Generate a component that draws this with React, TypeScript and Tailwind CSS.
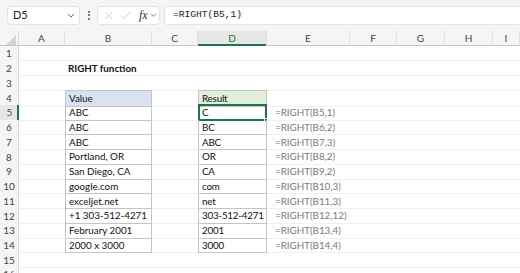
import React from "react";

const cols = ["A", "B", "C", "D", "E", "F", "G", "H", "I"];

const rows: { b?: string; d?: string; e?: string }[] = [
  {},
  {},
  {},
  { b: "Value", d: "Result" },
  { b: "ABC", d: "C", e: "=RIGHT(B5,1)" },
  { b: "ABC", d: "BC", e: "=RIGHT(B6,2)" },
  { b: "ABC", d: "ABC", e: "=RIGHT(B7,3)" },
  { b: "Portland, OR", d: "OR", e: "=RIGHT(B8,2)" },
  { b: "San Diego, CA", d: "CA", e: "=RIGHT(B9,2)" },
  { b: "google.com", d: "com", e: "=RIGHT(B10,3)" },
  { b: "exceljet.net", d: "net", e: "=RIGHT(B11,3)" },
  { b: "+1 303-512-4271", d: "303-512-4271", e: "=RIGHT(B12,12)" },
  { b: "February 2001", d: "2001", e: "=RIGHT(B13,4)" },
  { b: "2000 x 3000", d: "3000", e: "=RIGHT(B14,4)" },
  {},
  {},
];

const gridCols = "grid grid-cols-[19px_46px_87px_46px_69px_83px_47px_48px_48px_1fr]";

const Chevron = ({ className }: { className?: string }) => (
  <svg viewBox="0 0 10 6" className={className} fill="none" stroke="#555" strokeWidth="1.1">
    <path d="M1 1l4 4 4-4" />
  </svg>
);

const Toolbar = () => (
  <div className="flex h-[31px] items-center bg-[#f5f5f5] pb-[1px] pl-[7px]">
    <div className="flex h-[19px] w-[73px] items-center justify-between rounded-[4px] border border-[#e3e3e3] bg-white pl-[5px] pr-[4px] text-[11px] text-[#222]">
      <span>D5</span>
      <Chevron className="h-[5px] w-[8px]" />
    </div>
    <div className="flex w-[17px] flex-col items-center gap-[1.5px]">
      <span className="h-[2px] w-[2px] rounded-full bg-[#555]" />
      <span className="h-[2px] w-[2px] rounded-full bg-[#555]" />
      <span className="h-[2px] w-[2px] rounded-full bg-[#555]" />
    </div>
    <div className="flex h-[19px] w-[63px] items-center rounded-[4px] border border-[#e3e3e3] bg-white pl-[6px]">
      <svg viewBox="0 0 10 10" className="h-[9px] w-[9px]" fill="none" stroke="#c8c8c8" strokeWidth="1">
        <path d="M1 1l8 8M9 1l-8 8" />
      </svg>
      <svg viewBox="0 0 12 10" className="ml-[7px] h-[9px] w-[11px]" fill="none" stroke="#c8c8c8" strokeWidth="1">
        <path d="M1 5l3.5 3.5L11 1" />
      </svg>
      <span className="ml-[8px] font-['Liberation_Serif'] text-[12px] italic leading-none text-[#333]">fx</span>
      <Chevron className="ml-[2px] h-[4px] w-[7px]" />
    </div>
    <div className="ml-[4px] flex h-[19px] flex-1 items-center rounded-l-[4px] border border-r-0 border-[#e3e3e3] bg-white pl-[8px] font-['Liberation_Mono'] text-[9.6px] text-[#222]">
      =RIGHT(B5,1)
    </div>
  </div>
);

const ColumnHeaders = () => (
  <div className={`${gridCols} h-[15px] border-b border-[#c6c6c6] bg-[#f5f5f5] text-[10px] text-[#444]`}>
    <div className="relative border-r border-[#dcdcdc]">
      <svg viewBox="0 0 10 10" className="absolute bottom-[1px] right-[2px] h-[10px] w-[10px]">
        <path d="M10 0L10 10L0 10Z" fill="#d4d4d4" />
      </svg>
    </div>
    {cols.map((c) => (
      <div
        key={c}
        className={
          c === "D"
            ? "flex items-center justify-center border-r border-[#dcdcdc] bg-[#e6e6e6] shadow-[inset_0_-2px_0_#217346] text-[#1e6b41]"
            : "flex items-center justify-center border-r border-[#e2e2e2]"
        }
      >
        {c}
      </div>
    ))}
  </div>
);

export default function App() {
  return (
    <div className="h-[273px] w-[520px] overflow-hidden bg-white font-['Lato'] text-[#111]">
      <Toolbar />
      <ColumnHeaders />
      {rows.map((r, i) => {
        const n = i + 1;
        const table = n >= 4 && n <= 14;
        const head = n === 4;
        const cell = "flex items-center border-b border-[#f0f0f0] pl-[3px] text-[9.8px] whitespace-nowrap";
        const tcell = `flex items-center border-b border-r border-l border-[#c4c4c4] pl-[3px] text-[9.8px] whitespace-nowrap ${head ? "border-t" : ""}`;
        return (
          <div key={n} className={`${gridCols} h-[14.75px]`}>
            <div
              className={
                n === 5
                  ? "flex items-center justify-center bg-[#e6e6e6] text-[10px] text-[#1e6b41] shadow-[inset_-2px_0_0_#217346]"
                  : "flex items-center justify-center border-r border-[#d6d6d6] bg-[#f5f5f5] text-[10px] text-[#444]"
              }
            >
              {n}
            </div>
            <div className={cell} />
            {n === 2 ? (
              <div className={`${cell} overflow-visible font-bold`}>RIGHT function</div>
            ) : table ? (
              <div className={`${tcell} ${head ? "bg-[#d9e1f2]" : ""}`}>{r.b}</div>
            ) : (
              <div className={cell} />
            )}
            <div className={cell} />
            {table ? (
              <div className={`${tcell} relative tracking-[-0.2px] ${head ? "bg-[#e2efda]" : ""}`}>
                {r.d}
                {n === 5 && (
                  <div className="absolute -left-[1px] -top-[1px] h-[calc(100%+2px)] w-[calc(100%+2px)] border-2 border-[#217346]">
                    <span className="absolute -bottom-[3px] -right-[3px] h-[4px] w-[4px] border border-white bg-[#217346]" />
                  </div>
                )}
              </div>
            ) : (
              <div className={cell} />
            )}
            <div className={`${cell} pl-[8px] text-[#7a7a7a]`}>{r.e}</div>
            <div className={cell} />
            <div className={cell} />
            <div className={cell} />
            <div className={cell} />
          </div>
        );
      })}
    </div>
  );
}
